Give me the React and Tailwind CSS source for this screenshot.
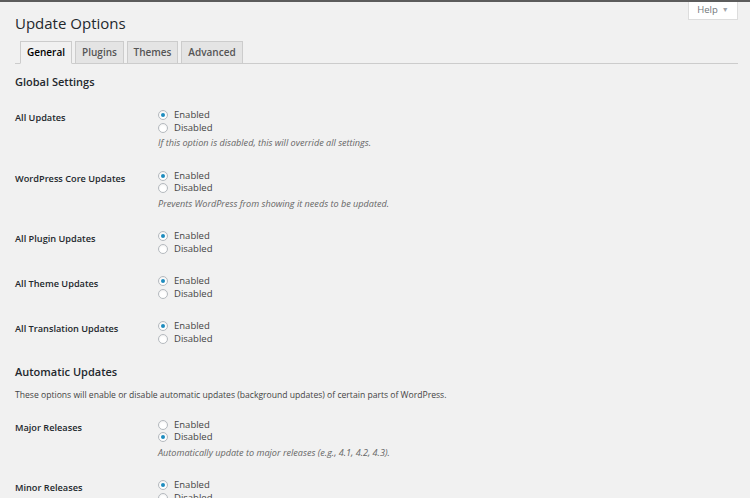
import React from "react";

const globalRows = [
  { label: "All Updates", value: "enabled", desc: "If this option is disabled, this will override all settings." },
  { label: "WordPress Core Updates", value: "enabled", desc: "Prevents WordPress from showing it needs to be updated." },
  { label: "All Plugin Updates", value: "enabled" },
  { label: "All Theme Updates", value: "enabled" },
  { label: "All Translation Updates", value: "enabled" },
];

const autoRows = [
  { label: "Major Releases", value: "disabled", desc: "Automatically update to major releases (e.g., 4.1, 4.2, 4.3)." },
  { label: "Minor Releases", value: "enabled" },
];

const tabs = [
  { name: "General", w: "w-[52px]", active: true },
  { name: "Plugins", w: "w-[49px]" },
  { name: "Themes", w: "w-[51px]" },
  { name: "Advanced", w: "w-[62px]" },
];

const Radio = ({ checked, label }) => (
  <label className="flex items-center h-[12.5px]">
    <span className="w-[10px] h-[10px] rounded-full border border-[#b4b9be] bg-white flex items-center justify-center mr-[6px] shadow-[inset_0_1px_2px_rgba(0,0,0,0.07)]">
      {checked && <span className="w-[4px] h-[4px] rounded-full bg-[#1e8cbe]" />}
    </span>
    <span>{label}</span>
  </label>
);

const OptionRow = ({ row }) => (
  <div className="flex py-[10px]">
    {/* label column */}
    <div className="w-[143px] pt-[3px] text-[9.2px] font-semibold text-[#23282d]">{row.label}</div>
    <div>
      <Radio checked={row.value === "enabled"} label="Enabled" />
      <Radio checked={row.value === "disabled"} label="Disabled" />
      {row.desc && <p className="mt-[3px] italic text-[9.1px] text-[#666]">{row.desc}</p>}
    </div>
  </div>
);

export default function App() {
  return (
    <div
      className="relative min-h-screen bg-[#f1f1f1] border-t-2 border-[#5c5c5c] text-[#444] text-[9.5px] leading-[12.5px] overflow-hidden"
      style={{ fontFamily: '"Open Sans", "Liberation Sans", sans-serif' }}
    >
      {/* Help tab */}
      <div className="absolute top-0 right-[12px] w-[50px] h-[18px] bg-white border border-t-0 border-[#ddd] flex items-center justify-center text-[#72777c] text-[9.5px]">
        Help <span className="ml-[4px] text-[7px] text-[#a0a5aa]">▼</span>
      </div>

      <div className="pl-[15px] pr-[12px]">
        <h1 className="mt-[11px] text-[15px] leading-[20px] text-[#23282d]">Update Options</h1>

        {/* Tabs */}
        <div className="mt-[8px] flex border-b border-[#ccc] pl-[5px] gap-[3px]">
          {tabs.map((t) => (
            <div
              key={t.name}
              className={`${t.w} h-[23px] -mb-px border border-[#ccc] flex items-center justify-center text-[10px] font-semibold ${
                t.active ? "bg-[#f1f1f1] border-b-[#f1f1f1] text-[#000]" : "bg-[#e4e4e4] text-[#555]"
              }`}
            >
              {t.name}
            </div>
          ))}
        </div>

        <h2 className="mt-[10px] mb-[9px] text-[11px] leading-[16px] font-semibold text-[#23282d]">Global Settings</h2>
        {globalRows.map((r) => (
          <OptionRow key={r.label} row={r} />
        ))}

        <h2 className="mt-[9px] text-[11px] leading-[16px] font-semibold text-[#23282d]">Automatic Updates</h2>
        <p className="mt-[9px] mb-[7px] text-[8.6px]">
          These options will enable or disable automatic updates (background updates) of certain parts of WordPress.
        </p>
        {autoRows.map((r) => (
          <OptionRow key={r.label} row={r} />
        ))}
      </div>
    </div>
  );
}
